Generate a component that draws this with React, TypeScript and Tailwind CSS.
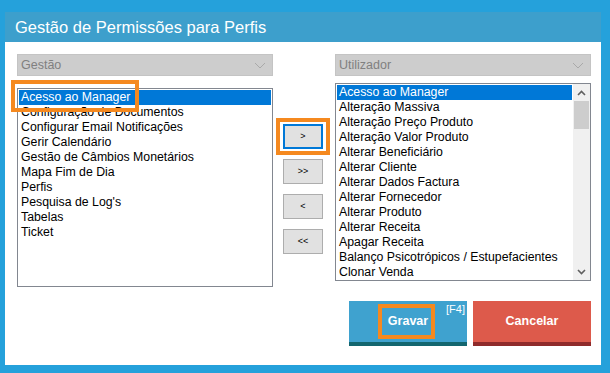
import React from "react";

const ESQUERDA = [
  "Acesso ao Manager",
  "Configuração de Documentos",
  "Configurar Email Notificações",
  "Gerir Calendário",
  "Gestão de Câmbios Monetários",
  "Mapa Fim de Dia",
  "Perfis",
  "Pesquisa de Log's",
  "Tabelas",
  "Ticket",
];

const DIREITA = [
  "Acesso ao Manager",
  "Alteração Massiva",
  "Alteração Preço Produto",
  "Alteração Valor Produto",
  "Alterar Beneficiário",
  "Alterar Cliente",
  "Alterar Dados Factura",
  "Alterar Fornecedor",
  "Alterar Produto",
  "Alterar Receita",
  "Apagar Receita",
  "Balanço Psicotrópicos / Estupefacientes",
  "Clonar Venda",
];

function Seletor({ label }: { label: string }) {
  return (
    <div className="flex h-[22px] items-center justify-between border border-[#c4c4c4] bg-[#cdcdcd] pl-[3px] pr-[6px] text-[12.5px] text-[#808080]">
      <span>{label}</span>
      <svg width="12" height="7" viewBox="0 0 12 7" fill="none">
        <path d="M1 1l5 5 5-5" stroke="#a9a9a9" strokeWidth="1" />
      </svg>
    </div>
  );
}

function Item({ texto, ativo }: { texto: string; ativo?: boolean }) {
  return (
    <div className={`h-[15px] whitespace-nowrap pl-[2px] text-[12.3px] leading-[15px] ${ativo ? "bg-[#0078d7] text-white" : "text-black"}`}>
      {texto}
    </div>
  );
}

function BotaoMover({ texto, foco }: { texto: string; foco?: boolean }) {
  return (
    <div className="relative">
      {foco && <div className="absolute left-[-7px] top-[-6px] h-[37px] w-[54px] border-4 border-[#f5891f]" />}
      <button
        className={`flex h-[25px] w-[40px] items-center justify-center bg-[#e1e1e1] text-[9px] text-black ${foco ? "border-2 border-[#0078d7]" : "border border-[#adadad]"}`}
      >
        {texto}
      </button>
    </div>
  );
}

export default function App() {
  return (
    <div className="h-[373px] w-[610px] bg-[#25a1db] pb-[8px] pl-[5px] pr-[9px] pt-[12px] font-['Liberation_Sans',Arial,sans-serif]">
      <div className="flex h-full flex-col bg-white">
        <div className="flex h-[30px] items-center bg-[#3d9fcc] pl-[10px] text-[16.5px] text-white">Gestão de Permissões para Perfis</div>

        <div className="flex pl-[12px] pt-[12px]">
          <div className="w-[256px]">
            <Seletor label="Gestão" />
            <div className="relative mt-[12px] h-[199px] border border-[#828790] p-[1px]">
              {ESQUERDA.map((t, i) => (
                <Item key={t} texto={t} ativo={i === 0} />
              ))}
              <div className="absolute left-[-7px] top-[-9px] h-[32px] w-[128px] border-4 border-[#f5891f]" />
            </div>
          </div>

          <div className="flex w-[62px] flex-col gap-[10px] pl-[10px] pt-[70px]">
            <BotaoMover texto=">" foco />
            <BotaoMover texto=">>" />
            <BotaoMover texto="<" />
            <BotaoMover texto="<<" />
          </div>

          <div className="w-[256px]">
            <Seletor label="Utilizador" />
            <div className="mt-[7px] flex h-[198px] border border-[#828790]">
              <div className="flex-1 overflow-hidden p-[1px]">
                {DIREITA.map((t, i) => (
                  <Item key={t} texto={t} ativo={i === 0} />
                ))}
              </div>
              <div className="flex w-[17px] flex-col bg-[#f0f0f0]">
                <div className="flex h-[17px] items-center justify-center">
                  <svg width="9" height="6" viewBox="0 0 9 6" fill="none">
                    <path d="M1 5l3.5-3.5L8 5" stroke="#606060" strokeWidth="1.6" />
                  </svg>
                </div>
                <div className="mx-[1px] h-[28px] bg-[#cdcdcd]" />
                <div className="flex-1" />
                <div className="flex h-[17px] items-center justify-center">
                  <svg width="9" height="6" viewBox="0 0 9 6" fill="none">
                    <path d="M1 1l3.5 3.5L8 1" stroke="#606060" strokeWidth="1.6" />
                  </svg>
                </div>
              </div>
            </div>
          </div>
        </div>

        <div className="mt-[14px] flex justify-end gap-[6px] pr-[10px]">
          <button className="relative flex h-[45px] w-[118px] items-center justify-center border-b-4 border-[#13666f] bg-[#3fa2cf] text-[12.5px] font-bold text-white">
            Gravar
            <span className="absolute right-[2px] top-[3px] text-[11px] font-normal leading-none">[F4]</span>
            <span className="absolute left-[29px] top-[3px] h-[35px] w-[57px] border-4 border-[#f5891f]" />
          </button>
          <button className="flex h-[45px] w-[118px] items-center justify-center border-b-4 border-[#8f2b2b] bg-[#dd5a4b] text-[12.5px] font-bold text-white">
            Cancelar
          </button>
        </div>
      </div>
    </div>
  );
}
